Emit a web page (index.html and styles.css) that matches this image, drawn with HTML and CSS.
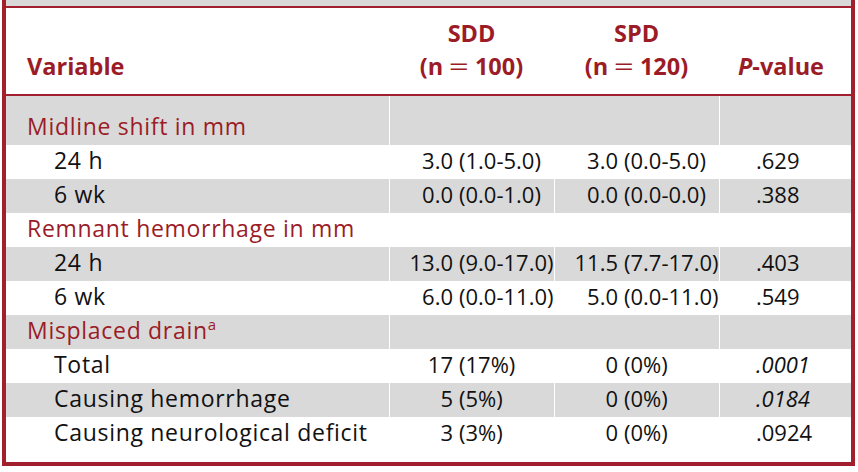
FILE: index.html
```html
<!DOCTYPE html>
<html>
<head>
<meta charset="utf-8">
<link rel="stylesheet" href="styles.css">
</head>
<body>
<div class="frame">
  <div class="prev"></div>
  <table class="data">
    <colgroup>
      <col class="c1"><col class="c2"><col class="c3"><col class="c4">
    </colgroup>
    <thead>
      <tr>
        <th class="var"><span class="spacer"></span>Variable</th>
        <th>SDD<br>(n <span class="eq">=</span> 100)</th>
        <th>SPD<br>(n <span class="eq">=</span> 120)</th>
        <th class="pv"><span class="spacer"></span><i>P</i>-value</th>
      </tr>
    </thead>
    <tbody>
      <tr class="group gray first">
        <td class="label">Midline shift in mm</td><td colspan="2" class="sep"></td><td class="sep"></td>
      </tr>
      <tr>
        <td class="sub">24 h</td>
        <td class="sep"><div class="al"><span class="l">3.0</span><span class="r">(1.0-5.0)</span></div></td>
        <td class="sep"><div class="al"><span class="l">3.0</span><span class="r">(0.0-5.0)</span></div></td>
        <td class="sep p">.629</td>
      </tr>
      <tr class="gray">
        <td class="sub">6 wk</td>
        <td class="sep"><div class="al"><span class="l">0.0</span><span class="r">(0.0-1.0)</span></div></td>
        <td class="sep"><div class="al"><span class="l">0.0</span><span class="r">(0.0-0.0)</span></div></td>
        <td class="sep p">.388</td>
      </tr>
      <tr class="group">
        <td class="label">Remnant hemorrhage in mm</td><td colspan="2" class="sep"></td><td class="sep"></td>
      </tr>
      <tr class="gray">
        <td class="sub">24 h</td>
        <td class="sep"><div class="al"><span class="l">13.0</span><span class="r">(9.0-17.0)</span></div></td>
        <td class="sep"><div class="al"><span class="l">11.5</span><span class="r">(7.7-17.0)</span></div></td>
        <td class="sep p">.403</td>
      </tr>
      <tr>
        <td class="sub">6 wk</td>
        <td class="sep"><div class="al"><span class="l">6.0</span><span class="r">(0.0-11.0)</span></div></td>
        <td class="sep"><div class="al"><span class="l">5.0</span><span class="r">(0.0-11.0)</span></div></td>
        <td class="sep p">.549</td>
      </tr>
      <tr class="group gray">
        <td class="label">Misplaced drain<sup>a</sup></td><td colspan="2" class="sep"></td><td class="sep"></td>
      </tr>
      <tr>
        <td class="sub">Total</td>
        <td class="sep"><div class="al"><span class="l">17</span><span class="r">(17%)</span></div></td>
        <td class="sep"><div class="al"><span class="l">0</span><span class="r">(0%)</span></div></td>
        <td class="sep p"><i>.0001</i></td>
      </tr>
      <tr class="gray">
        <td class="sub">Causing hemorrhage</td>
        <td class="sep"><div class="al"><span class="l">5</span><span class="r">(5%)</span></div></td>
        <td class="sep"><div class="al"><span class="l">0</span><span class="r">(0%)</span></div></td>
        <td class="sep p"><i>.0184</i></td>
      </tr>
      <tr class="last">
        <td class="sub">Causing neurological deficit</td>
        <td class="sep"><div class="al"><span class="l">3</span><span class="r">(3%)</span></div></td>
        <td class="sep"><div class="al"><span class="l">0</span><span class="r">(0%)</span></div></td>
        <td class="sep p">.0924</td>
      </tr>
    </tbody>
  </table>
</div>
</body>
</html>
```

FILE: styles.css
```css
html, body {
  margin: 0;
  padding: 0;
  background: #ffffff;
}

body {
  font-family: "Open Sans", "Liberation Sans", sans-serif;
  font-size: 23px;
  color: #111111;
}

.frame {
  margin-left: 2px;
  width: 845px;
  border-left: 4px solid #a2202d;
  border-right: 4px solid #a2202d;
  border-bottom: 4px solid #a2202d;
}

.prev {
  height: 6px;
  background: #d9d9d9;
  border-bottom: 2px solid #a2202d;
}

.data {
  width: 845px;
  table-layout: fixed;
  border-collapse: separate;
  border-spacing: 0;
}

.c1 { width: 383px; }
.c2 { width: 165px; }
.c3 { width: 165px; }
.c4 { width: 132px; }

th {
  color: #9b1c27;
  font-weight: 700;
  font-size: 23.5px;
  line-height: 33px;
  vertical-align: top;
  text-align: center;
  padding: 9px 0 11px 0;
  border-bottom: 2px solid #a2202d;
}

th.var {
  text-align: left;
  padding-left: 21px;
}

th.pv {
  padding-right: 8px;
}

.spacer {
  display: block;
  height: 33px;
}

.eq {
  font-weight: 400;
  display: inline-block;
  transform: scaleX(1.5);
  margin: 0 3px;
}

tbody tr { height: 34px; }
tbody tr.first { height: 49px; }
tbody tr.last { height: 45px; }

td {
  vertical-align: top;
  padding: 3px 0 0 0;
  line-height: 24px;
  white-space: nowrap;
  font-size: 22px;
}

tr.first td { padding-top: 18px; }

tr.gray td { background: #d9d9d9; }

td.sep { border-left: 1px solid #ffffff; }

td.label,
td.sub {
  font-size: 23px;
  letter-spacing: 0.7px;
}

td.label {
  color: #9b1c27;
  padding-left: 21px;
}

td.sub { padding-left: 48px; }

td.p { padding-left: 36px; }

.al {
  display: flex;
}

.al .l {
  width: 63px;
  text-align: right;
  margin-right: 6px;
}

sup {
  font-size: 15px;
  line-height: 0;
  vertical-align: 9px;
  letter-spacing: 0;
}
```
